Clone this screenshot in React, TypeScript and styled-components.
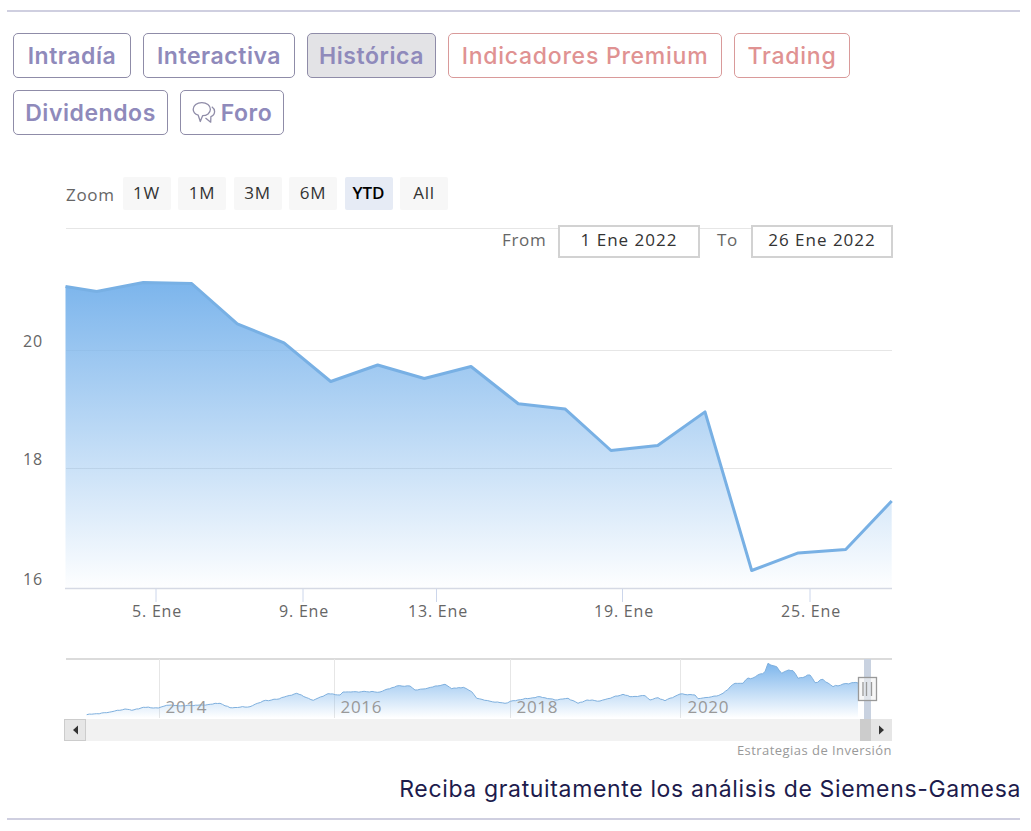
import React from "react";
import styled, { createGlobalStyle } from "styled-components";

const GlobalStyle = createGlobalStyle`
  html, body {
    margin: 0;
    padding: 0;
    background: #fff;
    font-family: "Open Sans", "Liberation Sans", sans-serif;
  }
`;

const Page = styled.div`
  width: 1031px;
  height: 831px;
  overflow: hidden;
  padding-top: 10px;
  box-sizing: border-box;
`;

const Rule = styled.hr`
  margin: 0 11px 0 7px;
  border: 0;
  height: 2px;
  background: #cfcfe0;
`;

const Tabs = styled.nav`
  display: flex;
  flex-wrap: wrap;
  gap: 12px;
  margin: 21px 0 0 13px;
  width: 860px;
`;

const Tab = styled.a<{ $w: number; $coral?: boolean; $active?: boolean }>`
  display: flex;
  align-items: center;
  justify-content: center;
  gap: 5px;
  box-sizing: border-box;
  width: ${(p) => p.$w}px;
  height: 45px;
  border: 1px solid ${(p) => (p.$coral ? "#d99a9a" : "#8f8ca8")};
  border-radius: 5px;
  background: ${(p) => (p.$active ? "#e3e3e6" : "#fff")};
  color: ${(p) => (p.$coral ? "#e09292" : "#8f8abb")};
  font-family: Inter, "Liberation Sans", sans-serif;
  font-size: 23px;
  font-weight: ${(p) => (p.$coral ? 500 : 600)};
  letter-spacing: ${(p) => (p.$coral ? "0.75px" : "0.55px")};
`;

const RangeBar = styled.div`
  display: flex;
  align-items: center;
  gap: 7.5px;
  margin: 42px 0 0 66px;
  height: 33px;
`;

const ZoomLabel = styled.span`
  width: 49px;
  font-size: 17px;
  letter-spacing: 0.7px;
  color: #666;
  padding-top: 2px;
`;

const RangeButton = styled.button<{ $active?: boolean }>`
  width: 48px;
  height: 33px;
  padding: 0 0 3px;
  border: 0;
  border-radius: 2px;
  background: ${(p) => (p.$active ? "#e6ebf5" : "#f7f7f7")};
  color: ${(p) => (p.$active ? "#000" : "#333")};
  font-family: inherit;
  font-size: 17px;
  font-weight: ${(p) => (p.$active ? 600 : 400)};
  letter-spacing: ${(p) => (p.$active ? "0" : "0.7px")};
`;

const ChartArea = styled.div`
  position: relative;
  width: 900px;
  height: 534px;
  margin-top: 18px;
`;

const ChartSvg = styled.svg`
  display: block;
`;

const DateInputs = styled.div`
  position: absolute;
  top: -3px;
  right: 7px;
  display: flex;
  align-items: flex-start;
  font-size: 17px;
  letter-spacing: 0.7px;
  color: #666;
`;

const DateLabel = styled.span<{ $w: number }>`
  width: ${(p) => p.$w}px;
  line-height: 30px;
`;

const DateBox = styled.span`
  box-sizing: border-box;
  width: 142px;
  height: 33px;
  border: 2px solid #d2d2d2;
  background: #fff;
  color: #333;
  text-align: center;
  line-height: 26px;
  letter-spacing: 1px;
`;

const Lead = styled.p`
  margin: 12px 10px 0 0;
  text-align: right;
  font-family: Inter, "Liberation Sans", sans-serif;
  font-size: 23px;
  font-weight: 400;
  line-height: 30px;
  letter-spacing: 0.65px;
  color: #1d1b4c;
  white-space: nowrap;
`;

const BottomRule = styled(Rule)`
  margin-top: 14px;
`;

const mainPoints: [number, number][] = [
  [65.5, 286.5], [96.7, 291.5], [143.3, 282.5], [191.7, 283.5], [237.3, 323.8], [284, 342.8],
  [330.7, 381.5], [377.7, 365], [424.3, 378.5], [471, 366.5], [518.3, 403.8], [565, 408.9],
  [611, 450.5], [657.7, 445.5], [705, 411.9], [751.7, 570.5], [798.3, 552.9], [845.7, 549.5],
  [891.7, 501],
];

const navAnchors: [number, number][] = [
  [86.7, 714.7], [106.7, 712.7], [125, 709], [131.7, 710.3], [143.3, 707.3], [158.3, 708],
  [166.7, 705.3], [183, 705.7], [203, 705], [220, 703.3], [230, 707.7], [250, 706.7],
  [263, 701], [276.7, 699.3], [296.7, 693.3], [313.3, 700.3], [328, 693.7], [340, 695],
  [343, 692], [366.7, 691.7], [380, 692], [396.7, 686], [410, 686], [415, 690], [423, 689],
  [445, 684.3], [451.7, 688.7], [463.3, 687.3], [471.7, 691.7], [476.7, 698.3], [490, 701.2],
  [505, 703.3], [513, 700.7], [540, 696.7], [555, 700], [568, 698.3], [578, 703.3], [587, 700],
  [600, 701], [623, 694.3], [630, 696.7], [645, 695.7], [650, 700], [658, 697.7], [665, 700.7],
  [680, 694], [695, 695], [698, 698.7], [716.7, 696], [723, 693.3], [735, 683.3], [743, 683.3],
  [748, 678], [753, 678], [765, 671.7], [768, 663.3], [776.7, 666.7], [781.7, 673.3],
  [786.7, 670.7], [793, 670.7], [798, 678.3], [810, 675], [815, 682.7], [823, 679.3],
  [833, 686.7], [843, 684], [851.7, 682.7], [858, 683],
];

// the overview series is daily data, so roughen the traced outline with a small wobble
const navPoints: [number, number][] = navAnchors.flatMap(([x, y], i) => {
  const next = navAnchors[i + 1];
  if (!next) return [[x, y] as [number, number]];
  const steps = Math.max(1, Math.round((next[0] - x) / 2.5));
  return Array.from({ length: steps }, (_, s) => {
    const px = x + ((next[0] - x) * s) / steps;
    const py = y + ((next[1] - y) * s) / steps;
    const amp = px > 725 ? 0.9 : 0.45;
    return [px, py + (s === 0 ? 0 : amp * Math.sin(px * 2.3) * Math.cos(px * 0.7))] as [number, number];
  });
});

const toLine = (pts: [number, number][]) => pts.map(([x, y]) => `${x.toFixed(1)},${y.toFixed(1)}`).join(" ");
const toArea = (pts: [number, number][], base: number) =>
  `${pts[0][0]},${base} ${toLine(pts)} ${pts[pts.length - 1][0]},${base}`;

const xTicks = [
  { x: 156, tx: 157, label: "5. Ene" },
  { x: 303, tx: 304, label: "9. Ene" },
  { x: 436.5, tx: 438, label: "13. Ene" },
  { x: 622.5, tx: 624, label: "19. Ene" },
  { x: 810, tx: 811, label: "25. Ene" },
];

const yLabels = [
  { y: 347, label: "20" },
  { y: 465, label: "18" },
  { y: 585, label: "16" },
];

const navYears = [
  { x: 159.5, label: "2014" },
  { x: 334.5, label: "2016" },
  { x: 510.5, label: "2018" },
  { x: 680.5, label: "2020", dx: 7 },
];

const ForoIcon = () => (
  <svg width="24" height="24" viewBox="0 0 24 24" fill="none" stroke="#8f8ca8" strokeWidth="1.3" strokeLinejoin="round">
    <path d="M6.2 14.2C3 13.2 1.2 11 1.2 8.3 1.2 4.5 4.9 1.7 9.8 1.7s8.6 2.8 8.6 6.6c0 3.7-3.6 6.4-7.8 6.4L8.3 20.5z" />
    <path d="M19.8 5.8c1.8 1.2 2.8 2.9 2.800 4.700 0 2.300-1.500 4.200-3.700 5.100l-.2 5.600-5.200-4.300" />
  </svg>
);

const PriceChart = () => (
  <ChartSvg width="900" height="534" viewBox="0 228 900 534">
    <defs>
      <linearGradient id="mainFill" x1="0" y1="282" x2="0" y2="592" gradientUnits="userSpaceOnUse">
        <stop offset="0" stopColor="#7cb5ec" />
        <stop offset="1" stopColor="#7cb5ec" stopOpacity="0" />
      </linearGradient>
      <linearGradient id="navFill" x1="0" y1="663" x2="0" y2="718" gradientUnits="userSpaceOnUse">
        <stop offset="0" stopColor="#7cb5ec" />
        <stop offset="1" stopColor="#7cb5ec" stopOpacity="0" />
      </linearGradient>
    </defs>

    {/* main plot */}
    <g stroke="#e6e6e6" strokeWidth="1.2">
      <line x1="66" x2="892" y1="228.5" y2="228.5" />
      <line x1="66" x2="892" y1="350.5" y2="350.5" />
      <line x1="66" x2="892" y1="468.5" y2="468.5" />
    </g>
    <polygon points={toArea(mainPoints, 588)} fill="url(#mainFill)" />
    <polyline points={toLine(mainPoints)} fill="none" stroke="#78b0e4" strokeWidth="3" strokeLinejoin="round" />
    <line x1="65" x2="892" y1="588.5" y2="588.5" stroke="#d5d9e4" strokeWidth="1.5" />
    {xTicks.map((t) => (
      <g key={t.label}>
        <line x1={t.x} x2={t.x} y1="589" y2="602" stroke="#ccd6eb" />
        <text x={t.tx} y="617" textAnchor="middle" fontSize="16" letterSpacing="0.8" fill="#666">
          {t.label}
        </text>
      </g>
    ))}
    {yLabels.map((t) => (
      <text key={t.label} x="23" y={t.y} fontSize="16" letterSpacing="0.8" fill="#666">
        {t.label}
      </text>
    ))}

    {/* navigator */}
    <line x1="66" x2="892" y1="659" y2="659" stroke="#cfcfcf" strokeWidth="1.5" />
    {navYears.map((t) => (
      <line key={t.label} x1={t.x} x2={t.x} y1="659" y2="718" stroke="#e6e6e6" />
    ))}
    <polygon points={toArea(navPoints, 718)} fill="url(#navFill)" />
    <polyline points={toLine(navPoints)} fill="none" stroke="#7fb0de" strokeWidth="1" />
    {navYears.map((t) => (
      <text key={t.label} x={t.x + (t.dx ?? 6)} y="713" fontSize="17" letterSpacing="0.7" fill="#999">
        {t.label}
      </text>
    ))}
    <rect x="864" y="659" width="7" height="60" fill="#c9d2e0" />

    {/* scrollbar */}
    <rect x="64" y="719" width="828" height="22" fill="#f2f2f2" />
    <rect x="64.5" y="719.5" width="21" height="21" fill="#e6e6e6" stroke="#ccc" />
    <path d="M78 725.5v9l-5-4.5z" fill="#333" />
    <rect x="860" y="719" width="11" height="22" fill="#cccccc" />
    <rect x="871" y="719" width="21" height="22" fill="#e6e6e6" />
    <path d="M879 725.5v9l5-4.5z" fill="#333" />

    {/* navigator handle */}
    <rect x="858.5" y="677.5" width="18" height="23" fill="#f2f2f2" fillOpacity="0.6" stroke="#999" strokeWidth="1.3" />
    <path d="M863 682v14M866.5 682v14M871.5 682v14" stroke="#999" strokeWidth="1.3" fill="none" />

    <text x="892" y="755" textAnchor="end" fontSize="13" letterSpacing="0.45" fill="#999">
      Estrategias de Inversión
    </text>
  </ChartSvg>
);

export default function App() {
  return (
    <Page>
      <GlobalStyle />
      <Rule />
      <Tabs>
        <Tab $w={118}>Intradía</Tab>
        <Tab $w={152}>Interactiva</Tab>
        <Tab $w={129} $active>Histórica</Tab>
        <Tab $w={274} $coral>Indicadores Premium</Tab>
        <Tab $w={116} $coral>Trading</Tab>
        <Tab $w={155}>Dividendos</Tab>
        <Tab $w={104}>
          <ForoIcon />
          Foro
        </Tab>
      </Tabs>
      <RangeBar>
        <ZoomLabel>Zoom</ZoomLabel>
        <RangeButton>1W</RangeButton>
        <RangeButton>1M</RangeButton>
        <RangeButton>3M</RangeButton>
        <RangeButton>6M</RangeButton>
        <RangeButton $active>YTD</RangeButton>
        <RangeButton>All</RangeButton>
      </RangeBar>
      <ChartArea>
        <PriceChart />
        <DateInputs>
          <DateLabel $w={56}>From</DateLabel>
          <DateBox>1 Ene 2022</DateBox>
          <DateLabel $w={17} />
          <DateLabel $w={34}>To</DateLabel>
          <DateBox>26 Ene 2022</DateBox>
        </DateInputs>
      </ChartArea>
      <Lead>Reciba gratuitamente los análisis de Siemens-Gamesa</Lead>
      <BottomRule />
    </Page>
  );
}
